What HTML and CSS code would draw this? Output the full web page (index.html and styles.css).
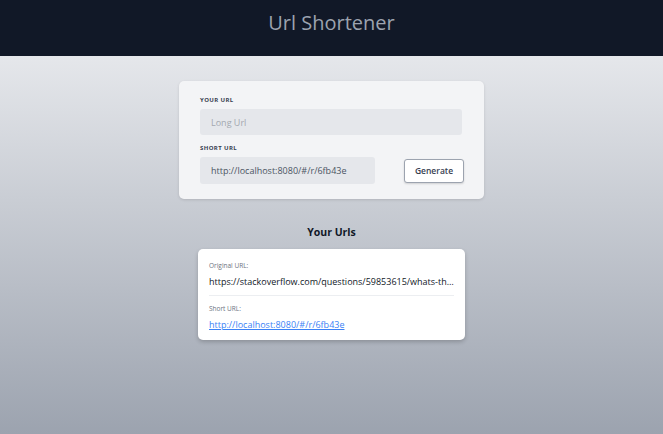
FILE: index.html
```html
<!DOCTYPE html>
<html>
<head>
<meta charset="utf-8">
<link rel="stylesheet" href="styles.css">
</head>
<body>
<header class="top">
  <h1 class="title">Url Shortener</h1>
</header>
<main class="page">
  <section class="form-card">
    <label class="label">YOUR URL</label>
    <div class="input long">Long Url</div>
    <label class="label second">SHORT URL</label>
    <div class="row">
      <div class="input short">http://localhost:8080/#/r/6fb43e</div>
      <button class="btn">Generate</button>
    </div>
  </section>
  <h2 class="heading">Your Urls</h2>
  <section class="url-card">
    <div class="small">Original URL:</div>
    <div class="orig">https://stackoverflow.com/questions/59853615/whats-the-difference-between-the-two</div>
    <div class="divider"></div>
    <div class="small">Short URL:</div>
    <a class="link" href="#">http://localhost:8080/#/r/6fb43e</a>
  </section>
</main>
</body>
</html>
```
FILE: styles.css
```css
html, body {
  margin: 0;
  padding: 0;
  height: 100%;
}
body {
  font-family: "Open Sans", "Noto Sans", sans-serif;
  display: flex;
  flex-direction: column;
  min-height: 434px;
}
.top {
  background: #111827;
  height: 56px;
  display: flex;
  align-items: center;
  justify-content: center;
  box-shadow: 0 1px 2px rgba(0,0,0,0.3);
}
.title {
  margin: 0;
  font-weight: 400;
  font-size: 20px;
  color: #9ca3af;
  position: relative;
  top: -6px;
}
.page {
  flex: 1;
  background: linear-gradient(#e5e7eb, #9ca3af);
  display: flex;
  flex-direction: column;
  align-items: center;
  padding-top: 25px;
}
.form-card {
  width: 305px;
  box-sizing: border-box;
  background: #f3f4f6;
  border-radius: 5px;
  padding: 15px 22px 15px 21px;
  display: flex;
  flex-direction: column;
  box-shadow: 0 1px 3px rgba(0,0,0,0.12);
}
.label {
  font-size: 6px;
  font-weight: 700;
  letter-spacing: 0.4px;
  color: #374151;
  line-height: 8px;
  margin-bottom: 5px;
}
.label.second {
  margin-top: 9px;
}
.input {
  background: #e5e7eb;
  border-radius: 3px;
  height: 26px;
  box-sizing: border-box;
  padding-left: 11px;
  display: flex;
  align-items: center;
  font-size: 9px;
  color: #4b5563;
}
.input.long {
  color: #a3a8b0;
}
.row {
  display: flex;
  align-items: center;
  justify-content: space-between;
  margin-right: -2px;
}
.input.short {
  width: 175px;
  height: 27px;
}
.btn {
  width: 60px;
  height: 24px;
  background: #ffffff;
  border: 1px solid #9ca3af;
  border-radius: 3px;
  font-family: "Open Sans", "Noto Sans", sans-serif;
  font-size: 8.5px;
  font-weight: 600;
  color: #374151;
  padding: 0;
  box-shadow: 0 1px 2px rgba(0,0,0,0.15);
}
.heading {
  margin: 26px 0 10px;
  font-size: 10.5px;
  font-weight: 700;
  color: #111827;
  line-height: 14px;
}
.url-card {
  width: 267px;
  box-sizing: border-box;
  background: #ffffff;
  border-radius: 5px;
  padding: 12px 11px 9px 11px;
  box-shadow: 0 2px 4px rgba(0,0,0,0.2);
  display: flex;
  flex-direction: column;
}
.small {
  font-size: 6.5px;
  color: #6b7280;
  line-height: 9px;
}
.orig {
  margin-top: 6px;
  font-size: 9px;
  line-height: 12px;
  color: #111827;
  white-space: nowrap;
  overflow: hidden;
  text-overflow: ellipsis;
}
.divider {
  height: 1px;
  background: #eceef1;
  margin: 7px 0 8px;
}
.link {
  margin-top: 6px;
  font-size: 9px;
  line-height: 12px;
  color: #3b82f6;
  text-decoration: underline;
}
```
